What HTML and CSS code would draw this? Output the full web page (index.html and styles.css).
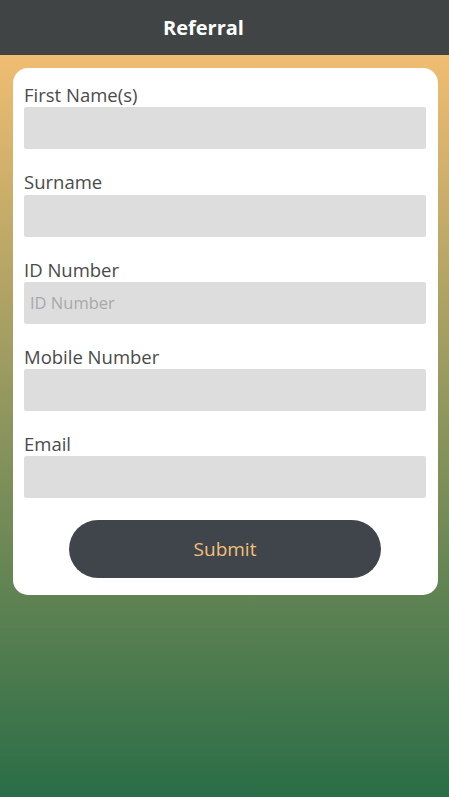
FILE: index.html
```html
<!DOCTYPE html>
<html lang="en">
<head>
<meta charset="utf-8"/>
<meta content="width=device-width, initial-scale=1.0" name="viewport"/>
<title>Referral</title>
<link rel="stylesheet" href="styles.css">
</head>
<body>
    <header class="topbar">
        <h1>Referral</h1>
    </header>
    <main class="page">
        <form class="card" id="referralForm">
            <div class="field">
                <label for="firstName">First Name(s)</label>
                <input type="text" id="firstName" name="firstName">
            </div>
            <div class="field">
                <label for="surname">Surname</label>
                <input type="text" id="surname" name="surname">
            </div>
            <div class="field">
                <label for="idNumber">ID Number</label>
                <input type="text" id="idNumber" name="idNumber" placeholder="ID Number">
            </div>
            <div class="field">
                <label for="mobile">Mobile Number</label>
                <input type="text" id="mobile" name="mobile">
            </div>
            <div class="field">
                <label for="email">Email</label>
                <input type="text" id="email" name="email">
            </div>
            <button type="submit" class="submit">Submit</button>
        </form>
    </main>
</body>
</html>
```
FILE: styles.css
```css
* {
    box-sizing: border-box;
}

html, body {
    margin: 0;
    padding: 0;
    height: 100%;
}

body {
    font-family: "Open Sans", "Noto Sans", sans-serif;
    display: flex;
    flex-direction: column;
}

/* Kopfzeile */
.topbar {
    background-color: #404445;
    height: 55px;
    display: flex;
    align-items: center;
    justify-content: center;
    padding-right: 42px;
}

.topbar h1 {
    margin: 0;
    color: #ffffff;
    font-size: 20px;
    font-weight: 700;
}

/* Hintergrund mit Verlauf */
.page {
    flex: 1;
    background: linear-gradient(#efbd72, #2a6d47);
    padding: 13px 11px 0 13px;
}

.card {
    background-color: #ffffff;
    border-radius: 15px;
    padding: 14px 12px 17px 11px;
    display: flex;
    flex-direction: column;
}

.field {
    display: flex;
    flex-direction: column;
    margin-bottom: 20px;
}

.field:last-of-type {
    margin-bottom: 22px;
}

.field label {
    color: #4a4a4a;
    font-size: 18.5px;
    line-height: 25.25px;
    height: 25.25px;
}

.field input {
    height: 42px;
    border: none;
    border-radius: 2px;
    background-color: #dddddd;
    padding: 0 6px;
    font-family: inherit;
    font-size: 16.5px;
    color: #444;
}

.field input::placeholder {
    color: #a9a9a9;
}

.submit {
    align-self: center;
    width: 312px;
    height: 58px;
    border: none;
    border-radius: 29px;
    background-color: #40454c;
    color: #f2c078;
    font-family: inherit;
    font-size: 19px;
}
```
